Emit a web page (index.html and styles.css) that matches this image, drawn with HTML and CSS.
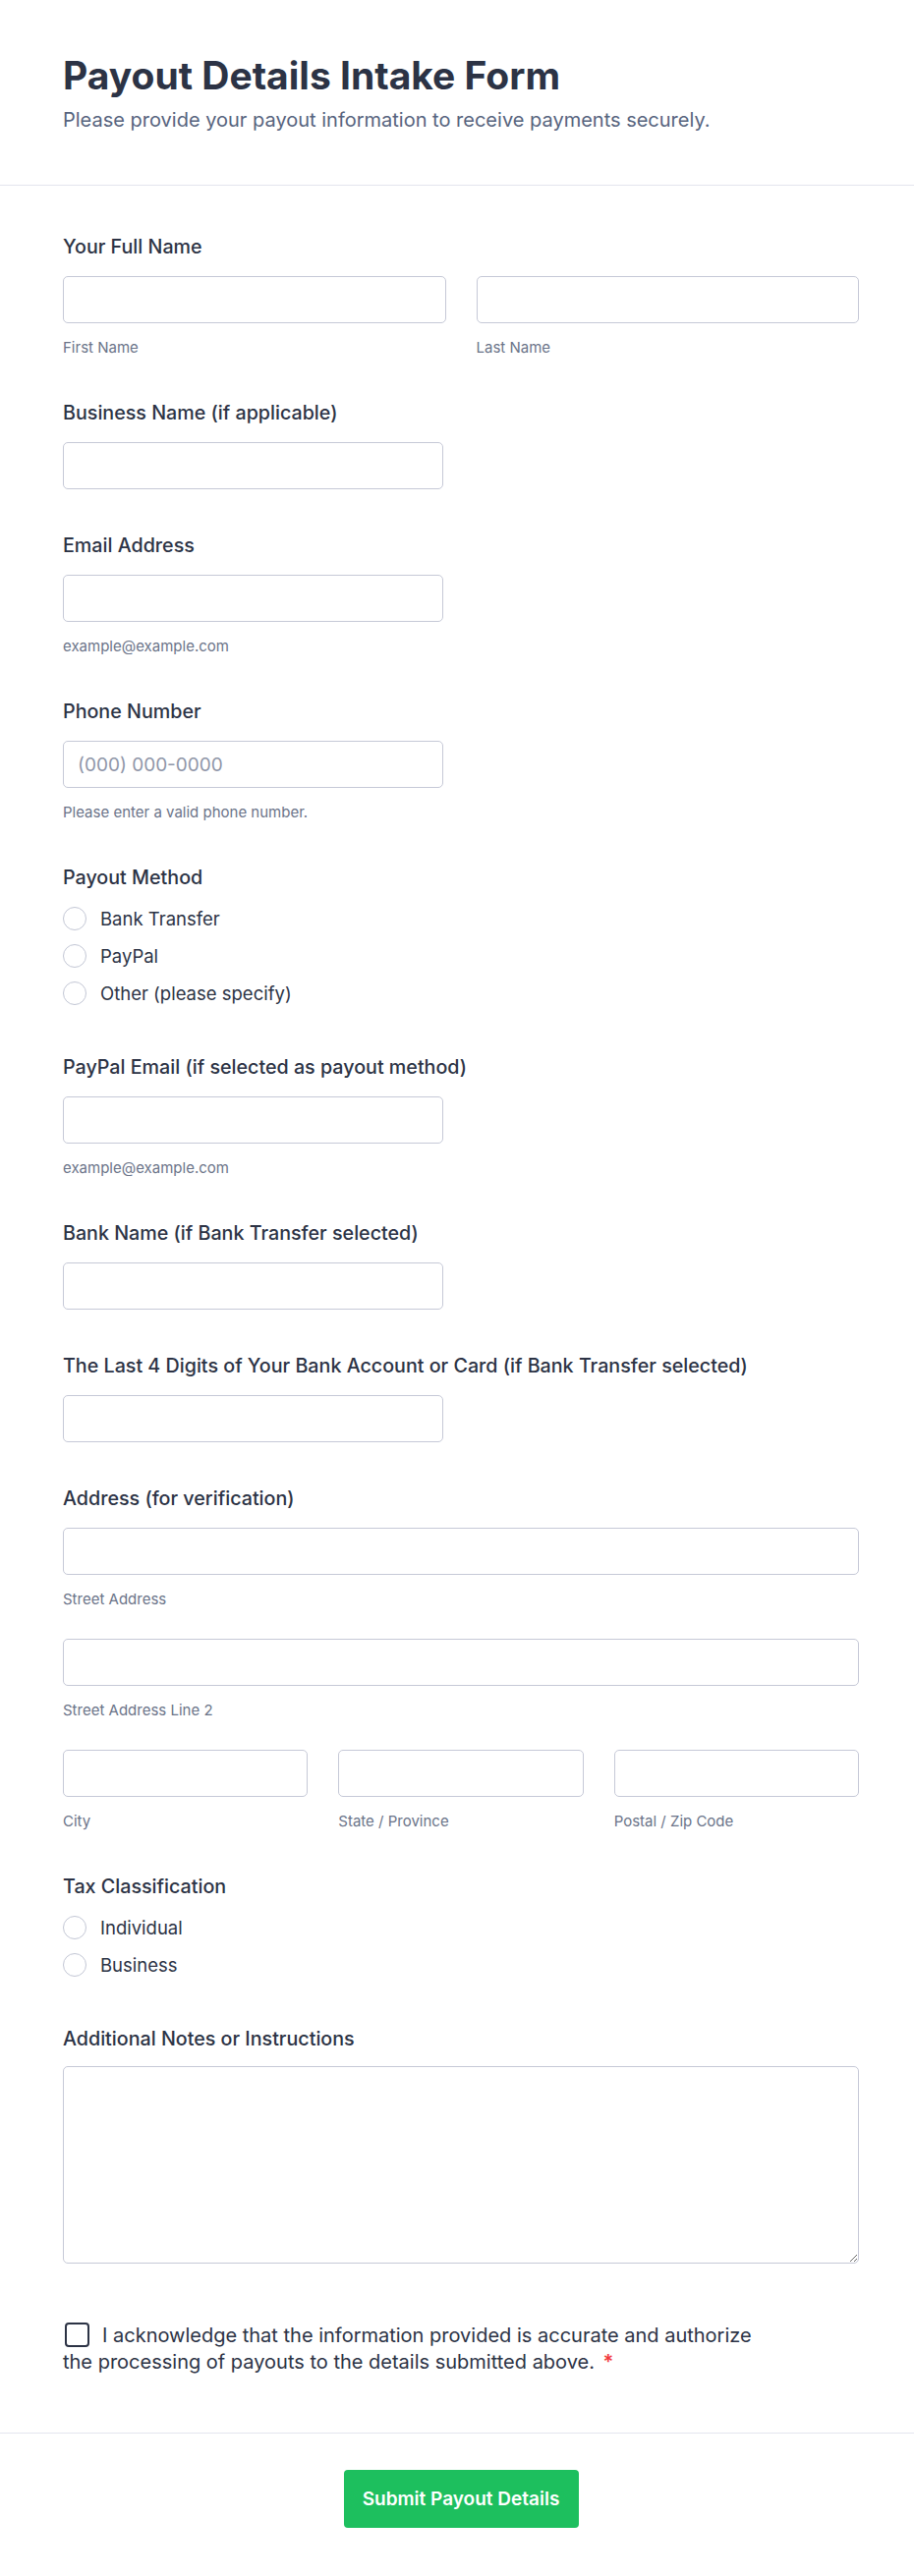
FILE: index.html
```html
<!DOCTYPE html>
<html lang="en">
<head>
<meta charset="utf-8">
<title>Payout Details Intake Form</title>
<link rel="stylesheet" href="styles.css">
</head>
<body>
<div class="page">
  <header class="header">
    <h1 class="title">Payout Details Intake Form</h1>
    <p class="subtitle">Please provide your payout information to receive payments securely.</p>
  </header>

  <form class="form">
    <div class="field">
      <div class="label">Your Full Name</div>
      <div class="row row-2">
        <div class="col"><input class="input" type="text"><div class="sublabel">First Name</div></div>
        <div class="col"><input class="input" type="text"><div class="sublabel">Last Name</div></div>
      </div>
    </div>

    <div class="field">
      <div class="label">Business Name (if applicable)</div>
      <input class="input input-half" type="text">
    </div>

    <div class="field">
      <div class="label">Email Address</div>
      <input class="input input-half" type="email">
      <div class="sublabel">example@example.com</div>
    </div>

    <div class="field">
      <div class="label">Phone Number</div>
      <input class="input input-half" type="tel" placeholder="(000) 000-0000">
      <div class="sublabel">Please enter a valid phone number.</div>
    </div>

    <div class="field field-options">
      <div class="label">Payout Method</div>
      <div class="options">
        <label class="option"><span class="radio"></span><span>Bank Transfer</span></label>
        <label class="option"><span class="radio"></span><span>PayPal</span></label>
        <label class="option"><span class="radio"></span><span>Other (please specify)</span></label>
      </div>
    </div>

    <div class="field">
      <div class="label">PayPal Email (if selected as payout method)</div>
      <input class="input input-half" type="email">
      <div class="sublabel">example@example.com</div>
    </div>

    <div class="field">
      <div class="label">Bank Name (if Bank Transfer selected)</div>
      <input class="input input-half" type="text">
    </div>

    <div class="field">
      <div class="label">The Last 4 Digits of Your Bank Account or Card (if Bank Transfer selected)</div>
      <input class="input input-half" type="text">
    </div>

    <div class="field">
      <div class="label">Address (for verification)</div>
      <div class="addr">
        <div class="col"><input class="input" type="text"><div class="sublabel">Street Address</div></div>
        <div class="col"><input class="input" type="text"><div class="sublabel">Street Address Line 2</div></div>
        <div class="row row-3">
          <div class="col"><input class="input" type="text"><div class="sublabel">City</div></div>
          <div class="col"><input class="input" type="text"><div class="sublabel">State / Province</div></div>
          <div class="col"><input class="input" type="text"><div class="sublabel">Postal / Zip Code</div></div>
        </div>
      </div>
    </div>

    <div class="field field-options">
      <div class="label">Tax Classification</div>
      <div class="options">
        <label class="option"><span class="radio"></span><span>Individual</span></label>
        <label class="option"><span class="radio"></span><span>Business</span></label>
      </div>
    </div>

    <div class="field field-notes">
      <div class="label">Additional Notes or Instructions</div>
      <textarea class="textarea"></textarea>
    </div>

    <div class="ack">
      <span class="checkbox"></span>I acknowledge that the information provided is accurate and authorize the processing of payouts to the details submitted above. <span class="req">*</span>
    </div>
  </form>

  <footer class="footer">
    <button class="submit" type="button">Submit Payout Details</button>
  </footer>
</div>
</body>
</html>
```
FILE: styles.css
```css
* { box-sizing: border-box; }
html, body { margin: 0; padding: 0; background: #ffffff; }
body {
  font-family: Inter, "Noto Sans", "Liberation Sans", sans-serif;
  color: #2c3345;
}
.page { width: 930px; }

.header {
  padding: 54px 56px 54px 64px;
  border-bottom: 1px solid #e3e5ee;
}
.title {
  margin: 0;
  font-size: 39px;
  line-height: 46px;
  font-weight: 700;
  color: #2c3345;
}
.subtitle {
  margin: 10px 0 0;
  font-size: 20px;
  line-height: 24px;
  color: #57647e;
}

.form {
  padding: 50px 56px 0 64px;
}
.field { margin-bottom: 45px; }
.field-options { margin-bottom: 51px; }
.field-notes { margin-bottom: 60px; }

.label {
  font-size: 19.7px;
  line-height: 24px;
  font-weight: 500;
  margin-bottom: 18px;
  color: #2c3345;
}
.field-notes .label { margin-bottom: 16px; }

.row { display: grid; gap: 31px; }
.row-2 { grid-template-columns: 1fr 1fr; }
.row-3 { grid-template-columns: 1fr 1fr 1fr; }
.addr { display: flex; flex-direction: column; gap: 31px; }

.input {
  display: block;
  width: 100%;
  height: 48px;
  border: 1px solid #c6c9d7;
  border-radius: 5px;
  background: #fff;
  padding: 0 14px;
  font-family: inherit;
  font-size: 19px;
  color: #2c3345;
  outline: none;
}
.input::placeholder { color: #8f96a8; }
.input-half { width: 387px; }

.sublabel {
  margin-top: 16px;
  font-size: 15px;
  line-height: 18px;
  color: #6b7489;
}

.options { display: flex; flex-direction: column; gap: 14px; }
.option {
  display: flex;
  align-items: center;
  gap: 14px;
  height: 24px;
  font-size: 18.5px;
  line-height: 24px;
  color: #2c3345;
}
.radio {
  width: 24px;
  height: 24px;
  border-radius: 50%;
  border: 1.5px solid #c3c7d5;
  background: #fff;
  flex: none;
}

.textarea {
  display: block;
  width: 100%;
  height: 201px;
  border: 1px solid #c6c9d7;
  border-radius: 5px;
  background: #fff;
  resize: vertical;
  font-family: inherit;
  font-size: 18px;
  outline: none;
}

.ack {
  max-width: 720px;
  font-size: 20px;
  line-height: 27px;
  color: #2c3345;
  padding-bottom: 58px;
}
.checkbox {
  display: inline-block;
  width: 25px;
  height: 25px;
  border: 2px solid #2c3345;
  border-radius: 4px;
  vertical-align: -5px;
  margin: 0 13px 0 2px;
}
.req { color: #f23a3c; font-weight: 600; margin-left: 3px; }

.footer {
  border-top: 1px solid #e3e5ee;
  padding: 37px 56px 50px 64px;
  display: flex;
  justify-content: center;
}
.submit {
  height: 59px;
  padding: 0 17px;
  min-width: 239px;
  border: none;
  border-radius: 4px;
  background: #1dbf5e;
  color: #ffffff;
  font-family: inherit;
  font-size: 19px;
  font-weight: 600;
}
```
